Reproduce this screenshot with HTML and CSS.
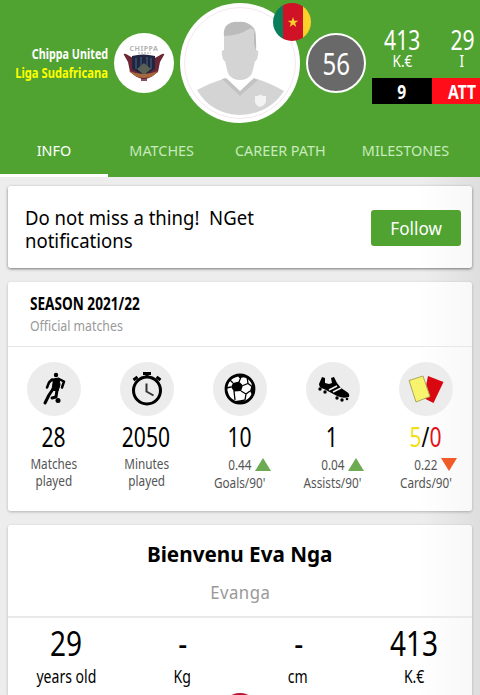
FILE: index.html
```
<!DOCTYPE html>
<html lang="en">
<head>
    <meta charset="UTF-8">
    <meta name="viewport" content="width=device-width, initial-scale=1.0">
    <title>Bienvenu Eva Nga</title>
    <link rel="stylesheet" href="styles.css">
</head>
<body>
    <header class="header">
        <div class="player">
            <div class="team">
                <div class="team-name"><span>Chippa United</span></div>
                <div class="team-league"><span>Liga Sudafricana</span></div>
            </div>
            <div class="shield">
                <svg width="60" height="60" viewBox="0 0 60 60">
                    <path d="M12 21q-3-1-2 1l4 7 2 10 7 5 7 3 7-3 7-5 2-10 4-7q1-2-2-1l-7 4H19z" fill="#6d2634"/>
                    <path d="M18 23q11-3 23 0v13l-11 7-12-7z" fill="#202640"/>
                    <path d="M22 25v11M27 24v12M33 24v12M37 25v11" stroke="#354566" stroke-width="2"/>
                    <path d="M23 36l7-6 7 6-7 6z" fill="#596054"/>
                    <path d="M15 38q15 6 29 0l-5 5q-9 4-18 0z" fill="#a5673e"/>
                    <path d="M27 47h6" stroke="#7c5866" stroke-width="2"/>
                    <text x="30" y="18" class="shield-text">CHIPPA</text>
                    <path d="M24 20h13" stroke="#aaa" stroke-dasharray="2 1"/>
                </svg>
            </div>
            <div class="photo">
                <svg width="120" height="120" viewBox="0 0 120 120">
                    <circle cx="60" cy="60" r="60" fill="#fff"/>
                    <circle cx="60" cy="60" r="55.5" fill="#fff" stroke="#f4e8f0"/>
                    <path d="M17 87q13-7 26-11l5 1 12 12 12-12 5-1q13 4 27 12-15 23-44 24-29-1-43-25z" fill="#d4d4d4"/>
                    <path d="M42 76l4-1 14 13 14-13 4 2-18 16z" fill="#c3c3c3"/>
                    <path d="M44 32q0-12 16-13 16 1 16 13v15q3 0 2 5-1 6-3 6-2 10-4 14-4 5-11 5t-11-5q-2-4-4-14-2 0-3-6-1-5 2-5z" fill="#d4d4d4"/>
                    <path d="M44 33q-1-7 3-11 5-4 11-3 9-1 14 5 5 5 4 24l-2-7V28q-2-4-5-2-11 7-25 7z" fill="#bbb"/>
                    <path d="M75 93q5 0 5-2 1 2 6 2v6q-2 4-6 5-4-1-5-5z" fill="#f3f3f3"/>
                </svg>
                <svg class="flag" width="38" height="38" viewBox="0 0 38 38">
                    <clipPath id="flag-circle"><circle cx="19" cy="19" r="19"/></clipPath>
                    <g clip-path="url(#flag-circle)">
                        <path d="M0 0h10v38H0z" fill="#087e5b"/>
                        <path d="M10 0h20v38H10z" fill="#d01227"/>
                        <path d="M30 0h8v38h-8z" fill="#fcd02b"/>
                    </g>
                    <path d="M20 14l1.3 3.7h4l-3.2 2.4 1.2 3.9-3.3-2.4-3.3 2.4 1.2-3.9-3.2-2.4h4z" fill="#f8cf2c"/>
                </svg>
            </div>
            <div class="elo"><span>56</span></div>
            <div class="facts">
                <div class="fact">
                    <div class="fact-value"><span>413</span></div>
                    <div class="fact-unit"><span>K.€</span></div>
                    <div class="tag dorsal"><span>9</span></div>
                </div>
                <div class="fact">
                    <div class="fact-value"><span>29</span></div>
                    <div class="fact-unit"><span>I</span></div>
                    <div class="tag position"><span>ATT</span></div>
                </div>
            </div>
        </div>
        <nav class="tabs">
            <a class="tab info active"><span>INFO</span></a>
            <a class="tab matches"><span>MATCHES</span></a>
            <a class="tab career"><span>CAREER PATH</span></a>
            <a class="tab milestones"><span>MILESTONES</span></a>
        </nav>
    </header>

    <main>
        <section class="card notify">
            <p>Do not miss a thing!&nbsp; NGet<br>notifications</p>
            <button class="follow"><span>Follow</span></button>
        </section>

        <section class="card season">
            <div class="season-head">
                <h2><span>SEASON 2021/22</span></h2>
                <p><span>Official matches</span></p>
            </div>
            <div class="stats">
                <div class="stat">
                    <div class="stat-icon">
                        <svg width="34" height="34" viewBox="0 0 34 34" fill="none" stroke="#000" stroke-linecap="round" stroke-linejoin="round">
                            <circle cx="19" cy="3" r="2.2" fill="#000" stroke="none"/>
                            <path d="M16 7l6-1 1 7-2 6-6-1 1-7z" fill="#000"/>
                            <path d="M15 7.5l-3 3-2 5M22 7l5 2.5-2 6" stroke-width="2.5"/>
                            <path d="M16 17l-4 6-4 8M20 18l-1 7-4 1" stroke-width="3"/>
                            <circle cx="21" cy="28.5" r="2.5" fill="#000" stroke="none"/>
                        </svg>
                    </div>
                    <div class="stat-value"><span>28</span></div>
                    <div class="stat-label"><span>Matches<br>played</span></div>
                </div>
                <div class="stat">
                    <div class="stat-icon">
                        <svg width="34" height="34" viewBox="0 0 34 34" fill="none" stroke="#000">
                            <circle cx="17" cy="18.5" r="13.5" stroke-width="3"/>
                            <path d="M17 1v4M13 1.5h8" stroke-width="3"/>
                            <path d="M3.5 8l4-3M26.500 5l4 3" stroke-width="3"/>
                            <path d="M16.5 11.5v8l7 4" stroke="#333" stroke-width="2"/>
                        </svg>
                    </div>
                    <div class="stat-value"><span>2050</span></div>
                    <div class="stat-label"><span>Minutes<br>played</span></div>
                </div>
                <div class="stat">
                    <div class="stat-icon">
                        <svg width="34" height="34" viewBox="0 0 34 34">
                            <clipPath id="ball"><circle cx="17" cy="17" r="15"/></clipPath>
                            <circle cx="17" cy="17" r="14" fill="#fff" stroke="#000" stroke-width="2.8"/>
                            <g clip-path="url(#ball)">
                                <path d="M10 11l6-1.5 4 4-2 5.500-7 .5-3-4.500zM14 0h11l-2 5-7 1zM29 12l5-1v13l-5-1-2-4zM12 29l7-1 4 5H10zM0 17l5 3 1 7-6-3z"/>
                                <path d="M16 10l2-5M20 13.500l5-2 4 3M25 11.500l-1-7M18 19l5 3 4-3M23 22l-1 6-4 1M11 19l1 9M8 15l-5 1M10 11L7 8" stroke="#000" fill="none" stroke-width="1.3"/>
                            </g>
                        </svg>
                    </div>
                    <div class="stat-value"><span>10</span></div>
                    <div class="trend"><span>0.44</span><i class="arrow up"></i></div>
                    <div class="stat-label"><span>Goals/90'</span></div>
                </div>
                <div class="stat">
                    <div class="stat-icon">
                        <svg width="34" height="34" viewBox="0 0 34 34">
                            <path d="M6 5l3 1v5l4 1 3-1-1-5 3-1 3 6 4 5 6 4q3 2 2 5-6 2-12-1L8 17q-5-1-5-5z"/>
                            <path d="M13 18l8-4M17 20l8-4" stroke="#eee" stroke-width="1.6"/>
                            <circle cx="4" cy="17" r="1.7"/>
                            <circle cx="9" cy="20" r="1.7"/>
                            <circle cx="21" cy="26" r="1.7"/>
                            <circle cx="26" cy="28" r="1.7"/>
                            <circle cx="31" cy="27" r="1.3"/>
                        </svg>
                    </div>
                    <div class="stat-value"><span>1</span></div>
                    <div class="trend"><span>0.04</span><i class="arrow up"></i></div>
                    <div class="stat-label"><span>Assists/90'</span></div>
                </div>
                <div class="stat">
                    <div class="stat-icon">
                        <svg width="38" height="34" viewBox="0 0 38 34">
                            <path d="M21 4l15.500 6-10 21-10-5z" fill="#d9070f"/>
                            <path d="M2 8.500L16 4l7 20.500L9 30z" fill="#f7f36c" stroke="#aaa761"/>
                        </svg>
                    </div>
                    <div class="stat-value"><span><b class="yellow">5</b>/<b class="red">0</b></span></div>
                    <div class="trend"><span>0.22</span><i class="arrow down"></i></div>
                    <div class="stat-label"><span>Cards/90'</span></div>
                </div>
            </div>
        </section>

        <section class="card profile">
            <h1><span>Bienvenu Eva Nga</span></h1>
            <p class="alias"><span>Evanga</span></p>
            <div class="measures">
                <div class="measure">
                    <div class="measure-value"><span>29</span></div>
                    <div class="measure-label"><span>years old</span></div>
                </div>
                <div class="measure">
                    <div class="measure-value"><span>-</span></div>
                    <div class="measure-label"><span>Kg</span></div>
                </div>
                <div class="measure">
                    <div class="measure-value"><span>-</span></div>
                    <div class="measure-label"><span>cm</span></div>
                </div>
                <div class="measure">
                    <div class="measure-value"><span>413</span></div>
                    <div class="measure-label"><span>K.€</span></div>
                </div>
            </div>
            <div class="country"></div>
        </section>
    </main>
</body>
</html>
```

FILE: styles.css
```
* {
    box-sizing: border-box;
}

body {
    margin: 0;
    height: 695px;
    overflow: hidden;
    background: linear-gradient(90deg, #ededed 88%, #dedede);
    font-family: "Noto Sans", "Open Sans", sans-serif;
    color: #000;
}

h1, h2, p {
    margin: 0;
    font-weight: normal;
}

/* narrow lettering */
.team span, .elo span, .fact span, .tab span, .follow span,
.season span, .profile span {
    display: inline-block;
    white-space: nowrap;
    transform: scaleX(0.8);
}

.header {
    height: 177px;
    overflow: hidden;
    background-color: #50a330;
    color: #fff;
}

.player {
    display: flex;
    width: 492px;
    height: 125px;
}

.team {
    width: 114px;
    padding: 44px 6px 0 0;
    font-size: 14px;
    font-weight: bold;
    line-height: 19px;
}

.team div {
    display: flex;
    justify-content: flex-end;
}

.team span {
    transform: scaleX(0.77);
    transform-origin: right;
}

.team .team-league span {
    transform: scaleX(0.8);
}

.team-league {
    color: #ff0;
}

.shield {
    width: 60px;
    height: 60px;
    margin: 33px 6px 0 0;
    border-radius: 50%;
    background-color: #fff;
}

.shield-text {
    font-size: 7px;
    font-weight: bold;
    letter-spacing: 0.5px;
    text-anchor: middle;
    fill: #b4b4b4;
}

.photo {
    position: relative;
    width: 120px;
    height: 120px;
    margin: 3px 6px 0 0;
}

.flag {
    position: absolute;
    top: 0;
    right: -11px;
}

.elo {
    width: 60px;
    height: 60px;
    margin: 33px 6px 0 0;
    border: 2px solid #fff;
    border-radius: 50%;
    background-color: #696969;
    font-size: 30px;
    line-height: 58px;
    text-align: center;
}

.facts {
    display: flex;
    padding-top: 24px;
}

.fact {
    width: 60px;
    text-align: center;
}

.fact-value {
    height: 29px;
    font-size: 27px;
    line-height: 31px;
}

.fact .fact-value span {
    transform: scaleX(0.78);
}

.fact-unit {
    height: 25px;
    font-size: 17px;
    line-height: 16px;
}

.tag {
    height: 26px;
    font-size: 20px;
    font-weight: bold;
    line-height: 27px;
}

.fact .tag span {
    transform: scaleX(0.78);
}

.dorsal {
    background-color: #000;
}

.position {
    background-color: #ff0d19;
}

.tabs {
    display: flex;
    height: 52px;
}

.tab {
    width: 108px;
    font-size: 15px;
    line-height: 50px;
    text-align: center;
    color: #c8eabc;
}

.tab.career {
    width: 128px;
}

.tab.milestones {
    width: 122px;
}

.tab.active {
    border-bottom: 3px solid #fff;
    color: #fff;
}

.tab span {
    transform: scaleX(0.96);
}

main {
    padding: 9px 8px 0;
}

.card {
    border-radius: 3px;
    background: linear-gradient(90deg, #fff 88%, #f8f8f8);
    box-shadow: 0 1px 3px rgba(0, 0, 0, 0.25);
}

.notify {
    display: flex;
    justify-content: space-between;
    height: 82px;
    padding: 20px 11px 0 17px;
    margin-bottom: 14px;
    box-shadow: 0 1px 3px rgba(0, 0, 0, 0.5);
}

.notify p {
    font-size: 20px;
    line-height: 23px;
    transform: scaleX(0.927);
    transform-origin: left;
}

.follow {
    width: 90px;
    height: 36px;
    margin-top: 4px;
    padding: 0;
    border: 0;
    border-radius: 3px;
    background-color: #50a330;
    color: #fff;
    font: 18px "Noto Sans", sans-serif;
}

.follow span {
    transform: scaleX(0.95);
}

.season {
    height: 229px;
    margin-bottom: 14px;
}

.season-head {
    height: 65px;
    padding: 10px 22px 0;
    border-bottom: 1px solid #e7e7e7;
}

.season-head span {
    transform-origin: left;
}

.season-head h2 {
    font-size: 17px;
    font-weight: bold;
    line-height: 23px;
}

.season-head p {
    font-size: 15px;
    line-height: 21px;
    color: #999;
}

.season .season-head p span {
    transform: scaleX(0.82);
}

.stats {
    display: flex;
    margin-left: -1px;
    padding-top: 15px;
}

.stat {
    width: 93px;
    flex-shrink: 0;
    text-align: center;
}

.stat-icon {
    display: flex;
    justify-content: center;
    align-items: center;
    width: 54px;
    height: 54px;
    margin: 0 auto;
    border-radius: 50%;
    background-color: #ececec;
}

.stat-value {
    height: 39px;
    padding-right: 1px;
    font-size: 27px;
    line-height: 41px;
}

.season .stat-value span {
    transform: scaleX(0.78);
}

.stat-value b {
    font-weight: normal;
}

.yellow {
    color: #f2df18;
}

.red {
    color: #e5101a;
}

.stat-label {
    font-size: 14px;
    line-height: 17px;
    color: #555;
}

.season .stat-label span {
    transform: scaleX(0.84);
}

.trend {
    display: flex;
    justify-content: center;
    align-items: center;
    height: 19px;
    padding-left: 18px;
    font-size: 14px;
    color: #555;
}

.season .trend span {
    transform: scaleX(0.84);
}

.arrow {
    margin-left: 2px;
    border-left: 8px solid transparent;
    border-right: 8px solid transparent;
}

.up {
    border-bottom: 13px solid #6caa54;
}

.down {
    border-top: 13px solid #f15a29;
}

.profile {
    height: 170px;
    overflow: hidden;
    border-radius: 3px 3px 0 0;
    text-align: center;
}

.profile h1 {
    padding-top: 13px;
    font-size: 22px;
    font-weight: bold;
    line-height: 30px;
}

.profile h1 span {
    transform: scaleX(0.94);
}

.alias {
    height: 50px;
    padding-top: 12px;
    border-bottom: 2px solid #e9e9e9;
    font-size: 18px;
    line-height: 24px;
    letter-spacing: 0.5px;
    color: #999;
}

.profile .alias span {
    transform: scaleX(0.93);
}

.measures {
    display: flex;
}

.measure {
    flex: 1;
}

.measure-value {
    height: 48px;
    padding-left: 1px;
    font-size: 35px;
    line-height: 49px;
}

.measure-label {
    height: 27px;
    font-size: 18px;
    line-height: 20px;
}

.profile .measure-label span {
    transform: scaleX(0.78);
}

.country {
    width: 38px;
    height: 38px;
    margin: 0 auto;
    border-radius: 50%;
    background: linear-gradient(90deg, #087e5b 27%, #b91530 27%, #b91530 75%, #fcd02b 75%);
}
```
